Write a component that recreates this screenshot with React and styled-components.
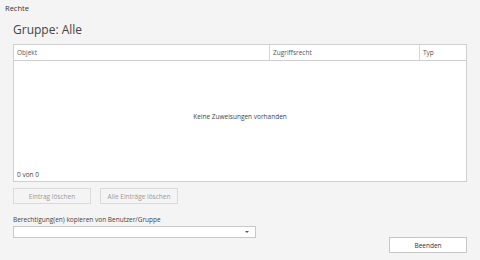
import styled, { createGlobalStyle } from "styled-components";

const Global = createGlobalStyle`
  html, body {
    margin: 0;
    padding: 0;
    background: #f4f4f4;
  }
  body {
    font-family: "Open Sans", "Noto Sans", "Liberation Sans", sans-serif;
    color: #3c3c3c;
  }
`;

const Window = styled.div`
  width: 480px;
  height: 260px;
  display: flex;
  flex-direction: column;
  box-sizing: border-box;
  background: #f4f4f4;
`;

const Caption = styled.div`
  font-size: 7.5px;
  line-height: 10px;
  padding: 3px 0 0 5px;
  color: #333;
`;

const Body = styled.div`
  display: flex;
  flex-direction: column;
  padding: 0 13px;
`;

const Heading = styled.div`
  font-size: 12px;
  line-height: 16px;
  margin-top: 9px;
  color: #444;
`;

const Table = styled.div`
  margin-top: 6px;
  height: 138px;
  box-sizing: border-box;
  border: 1px solid #cfcfcf;
  background: #fff;
  display: flex;
  flex-direction: column;
`;

const HeaderRow = styled.div`
  display: grid;
  grid-template-columns: 255px 150px 1fr;
  height: 15px;
  border-bottom: 1px solid #cfcfcf;
`;

const HeaderCell = styled.div`
  font-size: 6.5px;
  line-height: 15px;
  padding-left: 3px;
  color: #555;
  border-left: ${(p) => (p.$first ? "none" : "1px solid #d6d6d6")};
`;

const Empty = styled.div`
  flex: 1;
  display: flex;
  align-items: center;
  justify-content: center;
  font-size: 6.5px;
  color: #444;
  padding-top: 1px;
`;

const Footer = styled.div`
  font-size: 6.5px;
  line-height: 10px;
  padding: 0 0 1px 3px;
  color: #444;
`;

const ButtonRow = styled.div`
  display: flex;
  gap: 9px;
  margin-top: 6px;
`;

const Button = styled.button`
  width: 78px;
  height: 16px;
  box-sizing: border-box;
  border: 1px solid ${(p) => (p.disabled ? "#dadada" : "#c6c6c6")};
  background: ${(p) => (p.disabled ? "#f4f4f4" : "#fff")};
  color: ${(p) => (p.disabled ? "#9a9a9a" : "#333")};
  font-family: inherit;
  font-size: 6.5px;
  padding: 0;
`;

const Label = styled.div`
  font-size: 6.5px;
  line-height: 10px;
  margin-top: 11px;
  color: #444;
`;

const BottomRow = styled.div`
  display: flex;
  justify-content: space-between;
  align-items: flex-start;
`;

const Combo = styled.div`
  width: 243px;
  height: 12px;
  box-sizing: border-box;
  border: 1px solid #c8c8c8;
  background: #fff;
  margin-top: 1px;
  display: flex;
  justify-content: flex-end;
  align-items: center;
  padding-right: 6px;
`;

const Arrow = styled.div`
  width: 0;
  height: 0;
  border-left: 2px solid transparent;
  border-right: 2px solid transparent;
  border-top: 2px solid #555;
`;

const CloseButton = styled(Button)`
  margin-top: 12px;
`;

export default function App() {
  return (
    <>
      <Global />
      <Window>
        <Caption>Rechte</Caption>
        <Body>
          <Heading>Gruppe: Alle</Heading>
          <Table>
            <HeaderRow>
              <HeaderCell $first>Objekt</HeaderCell>
              <HeaderCell>Zugriffsrecht</HeaderCell>
              <HeaderCell>Typ</HeaderCell>
            </HeaderRow>
            <Empty>Keine Zuweisungen vorhanden</Empty>
            <Footer>0 von 0</Footer>
          </Table>
          <ButtonRow>
            <Button disabled>Eintrag löschen</Button>
            <Button disabled>Alle Einträge löschen</Button>
          </ButtonRow>
          <Label>Berechtigung(en) kopieren von Benutzer/Gruppe</Label>
          <BottomRow>
            <Combo>
              <Arrow />
            </Combo>
            <CloseButton>Beenden</CloseButton>
          </BottomRow>
        </Body>
      </Window>
    </>
  );
}
